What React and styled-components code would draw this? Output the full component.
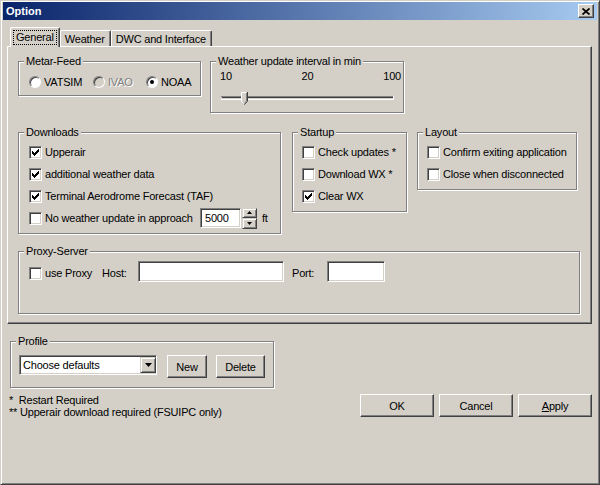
import React from 'react';
import styled, { createGlobalStyle } from 'styled-components';

const GlobalStyle = createGlobalStyle`
  html, body { margin: 0; padding: 0; background: #d4d0c8; }
  body {
    font-family: 'Liberation Sans', Arial, sans-serif;
    font-size: 11px;
    letter-spacing: -0.2px;
    color: #000;
  }
`;

const Window = styled.div`
  width: 600px;
  height: 485px;
  box-sizing: border-box;
  background: #d4d0c8;
  border: 1px solid;
  border-color: #d4d0c8 #404040 #404040 #d4d0c8;
  box-shadow: inset 1px 1px 0 #fff, inset -1px -1px 0 #808080;
  padding: 1px 2px 2px 2px;
  display: flex;
  flex-direction: column;
`;

const TitleBar = styled.div`
  height: 18px;
  display: flex;
  align-items: center;
  justify-content: space-between;
  padding: 0 3px 0 3px;
  background: linear-gradient(to right, #0a246a, #a6caf0);
`;

const TitleText = styled.span`
  color: #fff;
  font-weight: bold;
  font-size: 11px;
  letter-spacing: 0;
`;

const CloseButton = styled.div`
  width: 16px;
  height: 14px;
  box-sizing: border-box;
  background: #d4d0c8;
  border: 1px solid;
  border-color: #fff #404040 #404040 #fff;
  box-shadow: inset -1px -1px 0 #808080;
  display: flex;
  align-items: center;
  justify-content: center;
`;

const Body = styled.div`
  padding: 0 5px 0 4px;
  display: flex;
  flex-direction: column;
`;

const TabStrip = styled.div`
  display: flex;
  align-items: flex-end;
  height: 20px;
  margin-top: 7px;
  margin-bottom: -1px;
  padding-left: 3px;
  position: relative;
  z-index: 1;
`;

const Tab = styled.div`
  box-sizing: border-box;
  height: ${p => (p.$active ? 20 : 16)}px;
  margin-bottom: ${p => (p.$active ? 0 : 1)}px;
  padding: ${p => (p.$active ? '3px 3px 0 3px' : '2px 5px 0 4px')};
  line-height: 13px;
  background: #d4d0c8;
  border-top: 1px solid #fff;
  border-left: 1px solid #fff;
  border-right: 1px solid #404040;
  border-radius: 2px 2px 0 0;
  box-shadow: inset -1px 0 0 #808080;
  white-space: nowrap;
`;

const FocusLabel = styled.span`
  display: inline-block;
  padding: 0 2px;
  outline: 1px dotted #000;
  outline-offset: 0;
`;

const Panel = styled.div`
  width: 585px;
  height: 278px;
  box-sizing: border-box;
  border: 1px solid;
  border-color: #fff #404040 #404040 #fff;
  box-shadow: inset -1px -1px 0 #808080;
  padding: 14px 0 0 10px;
`;

const Row = styled.div`
  display: flex;
  align-items: flex-start;
  gap: ${p => p.$gap || 0}px;
  margin-top: ${p => p.$mt || 0}px;
`;

const Group = styled.div`
  position: relative;
  box-sizing: border-box;
  width: ${p => p.$w}px;
  height: ${p => p.$h}px;
  border: 1px solid #808080;
  box-shadow: inset 1px 1px 0 #fff, 1px 1px 0 #fff;
  padding: ${p => p.$pad || '8px 0 0 10px'};
  margin-left: ${p => p.$ml || 0}px;
`;

const Legend = styled.span`
  position: absolute;
  top: -7px;
  left: 5px;
  padding: 0 2px;
  line-height: 13px;
  background: #d4d0c8;
`;

const CheckRow = styled.div`
  display: flex;
  align-items: center;
  height: 22px;
`;

const Box = styled.span`
  width: 13px;
  height: 13px;
  box-sizing: border-box;
  flex-shrink: 0;
  border: 1px solid;
  border-color: #808080 #fff #fff #808080;
  box-shadow: inset 1px 1px 0 #404040, inset -1px -1px 0 #d4d0c8;
  background: #fff;
  display: flex;
  align-items: center;
  justify-content: center;
  margin-right: 3px;
`;

const Label = styled.span`
  white-space: pre;
  display: inline-block;
  width: ${p => (p.$w ? `${p.$w}px` : 'auto')};
  margin-left: ${p => p.$ml || 0}px;
  flex-shrink: 0;
`;

const RadioItem = styled.div`
  display: flex;
  align-items: center;
  width: ${p => (p.$w ? `${p.$w}px` : 'auto')};
`;

const RadioCircle = styled.span`
  position: relative;
  width: 12px;
  height: 12px;
  box-sizing: border-box;
  border-radius: 50%;
  border: 1px solid;
  border-color: #808080 #fff #fff #808080;
  box-shadow: inset 1px 1px 0 #404040;
  background: ${p => (p.$disabled ? '#d4d0c8' : '#fff')};
  margin-right: 3px;
  flex-shrink: 0;

  &::after {
    content: '';
    display: ${p => (p.$checked ? 'block' : 'none')};
    position: absolute;
    left: 3px;
    top: 3px;
    width: 4px;
    height: 4px;
    border-radius: 50%;
    background: #000;
  }
`;

const RadioText = styled.span`
  color: ${p => (p.$disabled ? '#808080' : '#000')};
  text-shadow: ${p => (p.$disabled ? '1px 1px 0 #fff' : 'none')};
`;

const ScaleRow = styled.div`
  width: 181px;
  display: flex;
  justify-content: space-between;
  line-height: 13px;
`;

const Track = styled.svg`
  display: block;
  margin-top: 8px;
`;

const Sunken = styled.div`
  box-sizing: border-box;
  width: ${p => p.$w}px;
  height: ${p => p.$h || 20}px;
  border: 1px solid;
  border-color: #808080 #fff #fff #808080;
  box-shadow: inset 1px 1px 0 #404040, inset -1px -1px 0 #d4d0c8;
  background: #fff;
  display: flex;
  align-items: center;
  padding-left: ${p => p.$pl || 0}px;
  margin-left: ${p => p.$ml || 0}px;
  margin-bottom: ${p => p.$lift || 0}px;
  flex-shrink: 0;
`;

const SpinStack = styled.div`
  display: flex;
  flex-direction: column;
  margin-left: 1px;
  margin-right: 5px;
`;

const Raised = styled.div`
  box-sizing: border-box;
  width: ${p => p.$w}px;
  height: ${p => p.$h}px;
  background: #d4d0c8;
  border: 1px solid;
  border-color: #d4d0c8 #404040 #404040 #d4d0c8;
  box-shadow: inset 1px 1px 0 #fff, inset -1px -1px 0 #808080;
  display: flex;
  align-items: center;
  justify-content: center;
  flex-shrink: 0;
`;

const ComboText = styled.span`
  flex: 1;
`;

const ProfileRow = styled.div`
  display: flex;
  align-items: flex-start;
`;

const Button = styled.div`
  box-sizing: border-box;
  width: ${p => p.$w}px;
  height: 23px;
  margin-left: ${p => p.$ml || 0}px;
  background: #d4d0c8;
  border: 1px solid;
  border-color: #fff #404040 #404040 #fff;
  box-shadow: inset -1px -1px 0 #808080;
  display: flex;
  align-items: center;
  justify-content: center;
  flex-shrink: 0;
`;

const ProfileGroup = styled(Group)`
  margin-top: 17px;
  margin-left: 3px;
`;

const BottomRow = styled.div`
  display: flex;
  justify-content: space-between;
  align-items: flex-start;
  margin-top: 6px;
`;

const Footnotes = styled.div`
  margin-left: 2px;
  line-height: 12px;
  white-space: pre;
`;

const ButtonBar = styled.div`
  display: flex;
  gap: 5px;
`;

function CheckMark() {
  return (
    <svg width="7" height="7" viewBox="0 0 7 7">
      <path d="M0 2h1v1h1v1h1v-1h1v-1h1v-1h1v-1h1v3h-1v1h-1v1h-1v1h-1v1h-1v-1h-1v-1h-1z" fill="#000" />
    </svg>
  );
}

function Check({ checked, children, w }) {
  return (
    <CheckRow>
      <Box>{checked && <CheckMark />}</Box>
      <Label $w={w}>{children}</Label>
    </CheckRow>
  );
}

function Radio({ checked, disabled, children, w }) {
  return (
    <RadioItem $w={w}>
      <RadioCircle $checked={checked} $disabled={disabled} />
      <RadioText $disabled={disabled}>{children}</RadioText>
    </RadioItem>
  );
}

function Arrow({ up }) {
  return (
    <svg width="5" height="3" viewBox="0 0 5 3">
      <path d={up ? 'M2.5 0 L5 3 L0 3 Z' : 'M0 0 L5 0 L2.5 3 Z'} fill="#000" />
    </svg>
  );
}

export default function App() {
  return (
    <>
      <GlobalStyle />
      <Window>
        <TitleBar>
          <TitleText>Option</TitleText>
          <CloseButton>
            <svg width="8" height="7" viewBox="0 0 8 7">
              <path d="M0.5 0.5 L7.5 6.5 M7.5 0.5 L0.5 6.5" stroke="#000" strokeWidth="1.7" />
            </svg>
          </CloseButton>
        </TitleBar>
        <Body>
          <TabStrip>
            <Tab $active>
              <FocusLabel>General</FocusLabel>
            </Tab>
            <Tab>Weather</Tab>
            <Tab>DWC and Interface</Tab>
          </TabStrip>
          <Panel>
            <Row $gap={9}>
              <Group $w={183} $h={35} $pad="9px 0 0 10px">
                <Legend>Metar-Feed</Legend>
                <CheckRow>
                  <Radio w={64}>VATSIM</Radio>
                  <Radio w={53} disabled>IVAO</Radio>
                  <Radio checked>NOAA</Radio>
                </CheckRow>
              </Group>
              <Group $w={194} $h={52} $pad="8px 0 0 9px">
                <Legend>Weather update interval in min</Legend>
                <ScaleRow>
                  <span>10</span>
                  <span>20</span>
                  <span>100</span>
                </ScaleRow>
                <Track width="180" height="14" viewBox="0 0 180 14">
                  <line x1="1" y1="5.5" x2="174" y2="5.5" stroke="#808080" />
                  <line x1="2" y1="6.5" x2="173" y2="6.5" stroke="#404040" />
                  <line x1="2" y1="7.5" x2="173" y2="7.5" stroke="#d4d0c8" />
                  <line x1="1" y1="8.5" x2="174" y2="8.5" stroke="#fff" />
                  <line x1="173.5" y1="5" x2="173.5" y2="9" stroke="#fff" />
                  <path d="M21 1 H27 V10 L24 13 L21 10 Z" fill="#d4d0c8" />
                  <path d="M21.5 10 V1.5 H26.5" stroke="#fff" fill="none" />
                  <path d="M27.5 1 V10.3 L24.2 13.6" stroke="#404040" fill="none" />
                  <path d="M26.5 2 V10 L24 12.5" stroke="#808080" fill="none" />
                  <path d="M21.5 10.5 L23.5 12.5" stroke="#fff" fill="none" />
                </Track>
              </Group>
            </Row>

            <Row $mt={19}>
              <Group $w={263} $h={102}>
                <Legend>Downloads</Legend>
                <Check checked>Upperair</Check>
                <Check checked>additional weather data</Check>
                <Check checked>Terminal Aerodrome Forecast (TAF)</Check>
                <CheckRow>
                  <Box />
                  <Label $w={155}>No weather update in approach</Label>
                  <Sunken $w={41} $pl={4}>5000</Sunken>
                  <SpinStack>
                    <Raised $w={15} $h={10}><Arrow up /></Raised>
                    <Raised $w={15} $h={11}><Arrow /></Raised>
                  </SpinStack>
                  <Label>ft</Label>
                </CheckRow>
              </Group>
              <Group $w={115} $h={80} $pad="8px 0 0 9px" $ml={11}>
                <Legend>Startup</Legend>
                <Check>Check updates *</Check>
                <Check>Download WX *</Check>
                <Check checked>Clear WX</Check>
              </Group>
              <Group $w={160} $h={58} $pad="8px 0 0 9px" $ml={10}>
                <Legend>Layout</Legend>
                <Check>Confirm exiting application</Check>
                <Check>Close when disconnected</Check>
              </Group>
            </Row>

            <Row $mt={17}>
              <Group $w={562} $h={63} $pad="10px 0 0 10px">
                <Legend>Proxy-Server</Legend>
                <CheckRow>
                  <Box />
                  <Label $w={57}>use Proxy</Label>
                  <Label $w={36}>Host:</Label>
                  <Sunken $w={146} $h={21} $lift={4} />
                  <Label $w={35} $ml={8}>Port:</Label>
                  <Sunken $w={58} $h={21} $lift={4} />
                </CheckRow>
              </Group>
            </Row>
          </Panel>

          <ProfileGroup $w={264} $h={47} $pad="13px 0 0 8px">
            <Legend>Profile</Legend>
            <ProfileRow>
              <Sunken $w={138} $pl={3}>
                <ComboText>Choose defaults</ComboText>
                <Raised $w={16} $h={16}>
                  <svg width="7" height="4" viewBox="0 0 7 4">
                    <path d="M0 0 H7 L3.5 4 Z" fill="#000" />
                  </svg>
                </Raised>
              </Sunken>
              <Button $w={40} $ml={10}>New</Button>
              <Button $w={49} $ml={9}>Delete</Button>
            </ProfileRow>
          </ProfileGroup>

          <BottomRow>
            <Footnotes>
              {'*  Restart Required\n** Upperair download required (FSUIPC only)'}
            </Footnotes>
            <ButtonBar>
              <Button $w={74}>OK</Button>
              <Button $w={74}>Cancel</Button>
              <Button $w={74}><span><u>A</u>pply</span></Button>
            </ButtonBar>
          </BottomRow>
        </Body>
      </Window>
    </>
  );
}
